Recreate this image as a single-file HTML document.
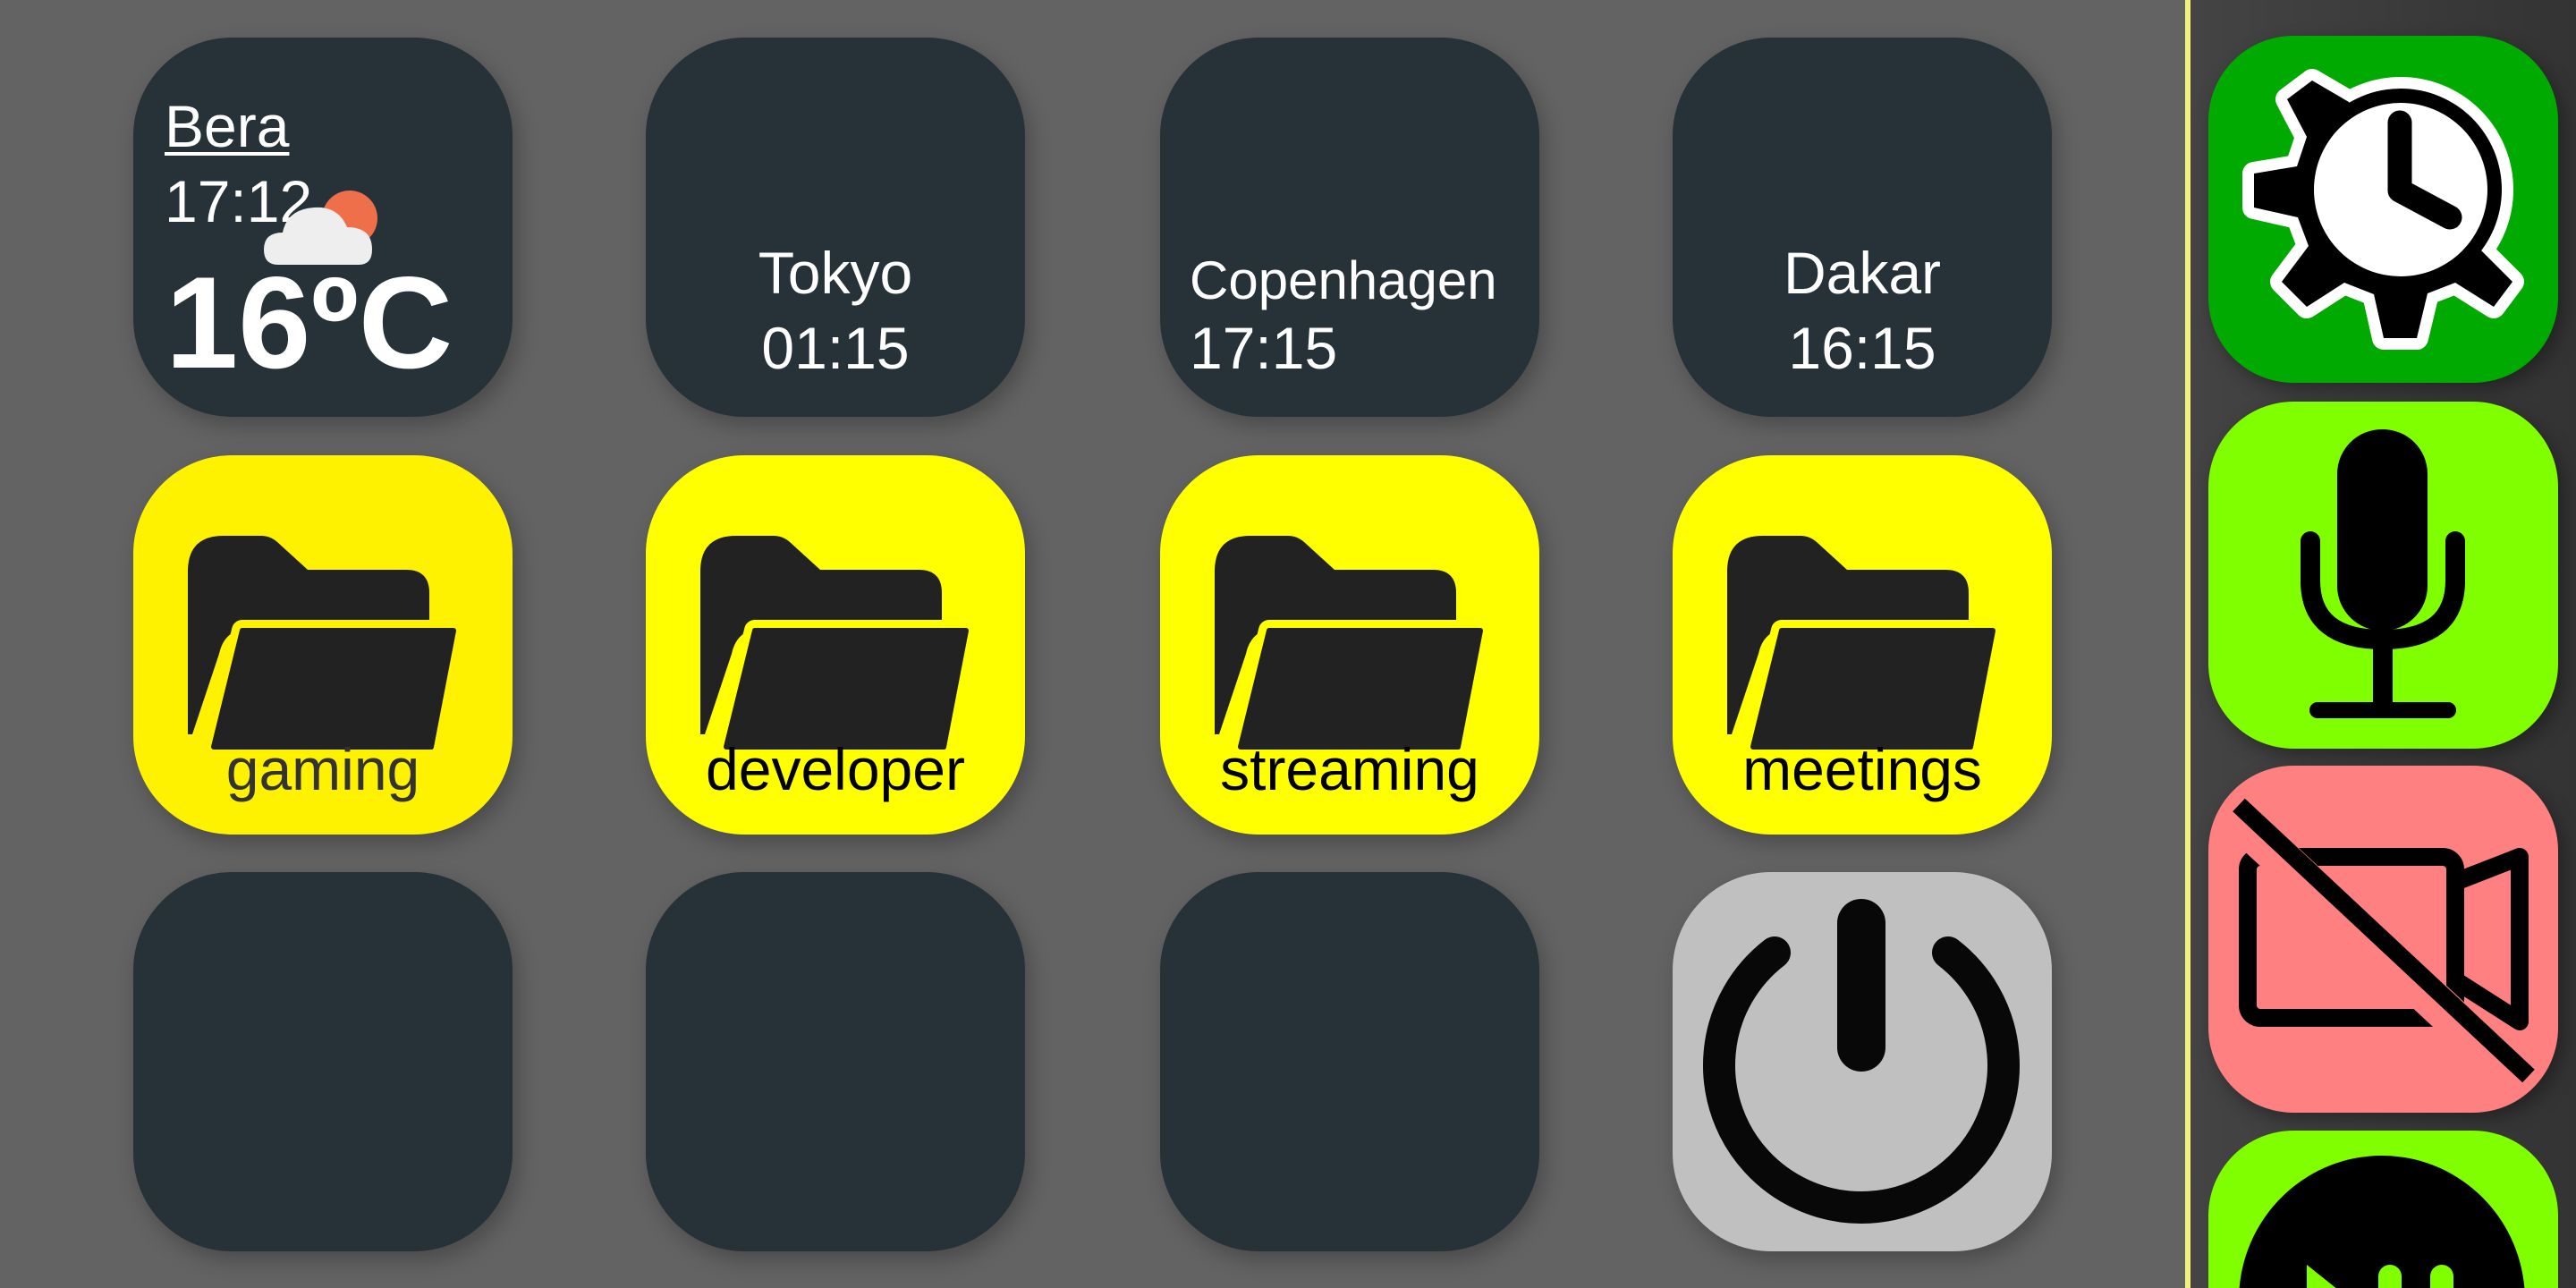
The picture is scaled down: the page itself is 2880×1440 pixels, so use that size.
<!DOCTYPE html>
<html style="width:2880px;height:1440px;overflow:hidden"><head><meta charset="utf-8"><style>
*{margin:0;padding:0;box-sizing:border-box}
html,body{width:2880px;height:1440px;overflow:hidden}
body{background:#636363;font-family:"Liberation Sans",sans-serif;position:relative}
.t{position:absolute;width:424px;height:424px;border-radius:110px;background:#263238;box-shadow:6px 10px 24px rgba(0,0,0,0.25);overflow:hidden}
.t svg{position:absolute;left:0;top:0}
.y{background:#ffff00;color:#ffff00}
.txt{position:absolute;color:#fff;white-space:nowrap;line-height:1}
.r{position:absolute;left:2469px;width:391px;height:388px;border-radius:95px;box-shadow:6px 8px 20px rgba(0,0,0,0.35);overflow:hidden}
.r svg{position:absolute;left:0;top:0}
</style></head><body>
<div style="position:absolute;left:2448px;top:0;width:432px;height:1440px;background:linear-gradient(90deg,#444,#333)"></div>
<div style="position:absolute;left:2443px;top:0;width:6px;height:1440px;background:#f5f07a"></div>

<div class="t" style="left:149px;top:42px">
  <div class="txt" style="left:35px;top:66px;font-size:66px;text-decoration:underline;text-decoration-thickness:4px;text-underline-offset:6px">Bera</div>
  <div class="txt" style="left:35px;top:150px;font-size:66px">17:12</div>
  <svg width="424" height="424">
    <circle cx="242" cy="202" r="31" fill="#ef6f4a"/>
    <path d="M162 254 q-16 0-16-17 q0-19 21-19 q5-26 35-28 q27-2 37 22 q28 0 28 25 q0 17-15 17 z" fill="#eeeeee"/>
  </svg>
  <div class="txt" style="left:36px;top:246px;font-size:146px;font-weight:bold">16ºC</div>
</div>
<div class="t" style="left:722px;top:42px">
  <div class="txt" style="left:0;width:424px;text-align:center;top:230px;font-size:66px">Tokyo</div>
  <div class="txt" style="left:0;width:424px;text-align:center;top:314px;font-size:66px">01:15</div>
</div>
<div class="t" style="left:1297px;top:42px">
  <div class="txt" style="left:33px;top:242px;font-size:60px">Copenhagen</div>
  <div class="txt" style="left:33px;top:314px;font-size:66px">17:15</div>
</div>
<div class="t" style="left:1870px;top:42px">
  <div class="txt" style="left:0;width:424px;text-align:center;top:230px;font-size:66px">Dakar</div>
  <div class="txt" style="left:0;width:424px;text-align:center;top:314px;font-size:66px">16:15</div>
</div>

<svg width="0" height="0" style="position:absolute"><defs>
<g id="fold">
  <path d="M61 312 V130 q0-40 40-40 h42 q10 0 18 7 l34 31 h110 q26 0 26 26 v40 H130 q-28 0-34 28 L66 312 z" fill="#222"/>
  <path d="M122 196 H358 L333 326 H90 Z" fill="#222" stroke="currentColor" stroke-width="24" stroke-linejoin="round"/>
  <path d="M122 196 H358 L333 326 H90 Z" fill="#222" stroke="#222" stroke-width="6" stroke-linejoin="round"/>
</g></defs></svg>
<div class="t y" style="left:149px;top:509px;background:#fff200;color:#fff200"><svg width="424" height="424"><use href="#fold"/></svg>
  <div class="txt" style="left:0;width:424px;text-align:center;top:318px;font-size:66px;color:#333">gaming</div></div>
<div class="t y" style="left:722px;top:509px"><svg width="424" height="424"><use href="#fold"/></svg>
  <div class="txt" style="left:0;width:424px;text-align:center;top:318px;font-size:66px;color:#000">developer</div></div>
<div class="t y" style="left:1297px;top:509px"><svg width="424" height="424"><use href="#fold"/></svg>
  <div class="txt" style="left:0;width:424px;text-align:center;top:318px;font-size:66px;color:#000">streaming</div></div>
<div class="t y" style="left:1870px;top:509px"><svg width="424" height="424"><use href="#fold"/></svg>
  <div class="txt" style="left:0;width:424px;text-align:center;top:318px;font-size:66px;color:#000">meetings</div></div>

<div class="t" style="left:149px;top:975px"></div>
<div class="t" style="left:722px;top:975px"></div>
<div class="t" style="left:1297px;top:975px"></div>
<div class="t" style="left:1870px;top:975px;background:#c0c0c0">
  <svg width="424" height="424">
    <path d="M114 90 A159 159 0 1 0 308 90" fill="none" stroke="#080808" stroke-width="36" stroke-linecap="round"/>
    <line x1="211" y1="57" x2="211" y2="196" stroke="#080808" stroke-width="54" stroke-linecap="round"/>
  </svg>
</div>

<div class="r" style="top:40px;background:#00aa00">
  <svg width="391" height="388">
    <defs>
      <g id="gear">
        <circle cx="215" cy="172" r="113"/>
        <path d="M157 74 L116 50 L88 71 L110 113 L99 146 L51 154 L51 192 L100 203 L112 235 L82 275 L110 303 L152 276 L185 289 L196 338 L233 338 L245 288 L276 276 L319 303 L340 275 L305 240 L215 172 Z"/>
      </g>
    </defs>
    <use href="#gear" fill="#fff" stroke="#fff" stroke-width="26" stroke-linejoin="round"/>
    <use href="#gear" fill="#000"/>
    <circle cx="215" cy="172" r="97" fill="#fff"/>
    <path d="M214 97 V173 L270 203" fill="none" stroke="#000" stroke-width="27" stroke-linecap="round" stroke-linejoin="round"/>
  </svg>
</div>
<div class="r" style="top:449px;background:#80ff00">
  <svg width="391" height="388">
    <rect x="144" y="31" width="101" height="225" rx="50" fill="#000"/>
    <path d="M114 156 V200 Q114 266 195 266 Q276 266 276 200 V156" fill="none" stroke="#000" stroke-width="22" stroke-linecap="round"/>
    <line x1="195" y1="270" x2="195" y2="340" stroke="#000" stroke-width="22"/>
    <line x1="122" y1="345" x2="268" y2="345" stroke="#000" stroke-width="18" stroke-linecap="round"/>
  </svg>
</div>
<div class="r" style="top:856px;background:#ff8080">
  <svg width="391" height="388">
    <rect x="44" y="102" width="232" height="180" rx="14" fill="none" stroke="#000" stroke-width="20"/>
    <path d="M276 130 L348 102 V286 L276 240" fill="none" stroke="#000" stroke-width="20" stroke-linejoin="round"/>
    <line x1="30" y1="56" x2="352" y2="356" stroke="#ff8080" stroke-width="44"/>
    <line x1="34" y1="44" x2="358" y2="347" stroke="#000" stroke-width="20"/>
  </svg>
</div>
<div class="r" style="top:1264px;height:176px;border-radius:95px 95px 0 0;background:#80ff00;box-shadow:none">
  <svg width="391" height="176" viewBox="0 0 391 176">
    <path d="M34.6 176 A160 162 0 0 1 353.4 176 Z" fill="#000"/>
    <path d="M110 150 L142.5 176 L110 176 Z" fill="#80ff00"/>
    <path d="M190 176 V163 a13 13 0 0 1 26 0 V176 Z" fill="#80ff00"/>
    <path d="M248 176 V163 a13 13 0 0 1 26 0 V176 Z" fill="#80ff00"/>
  </svg>
</div>
</body></html>
